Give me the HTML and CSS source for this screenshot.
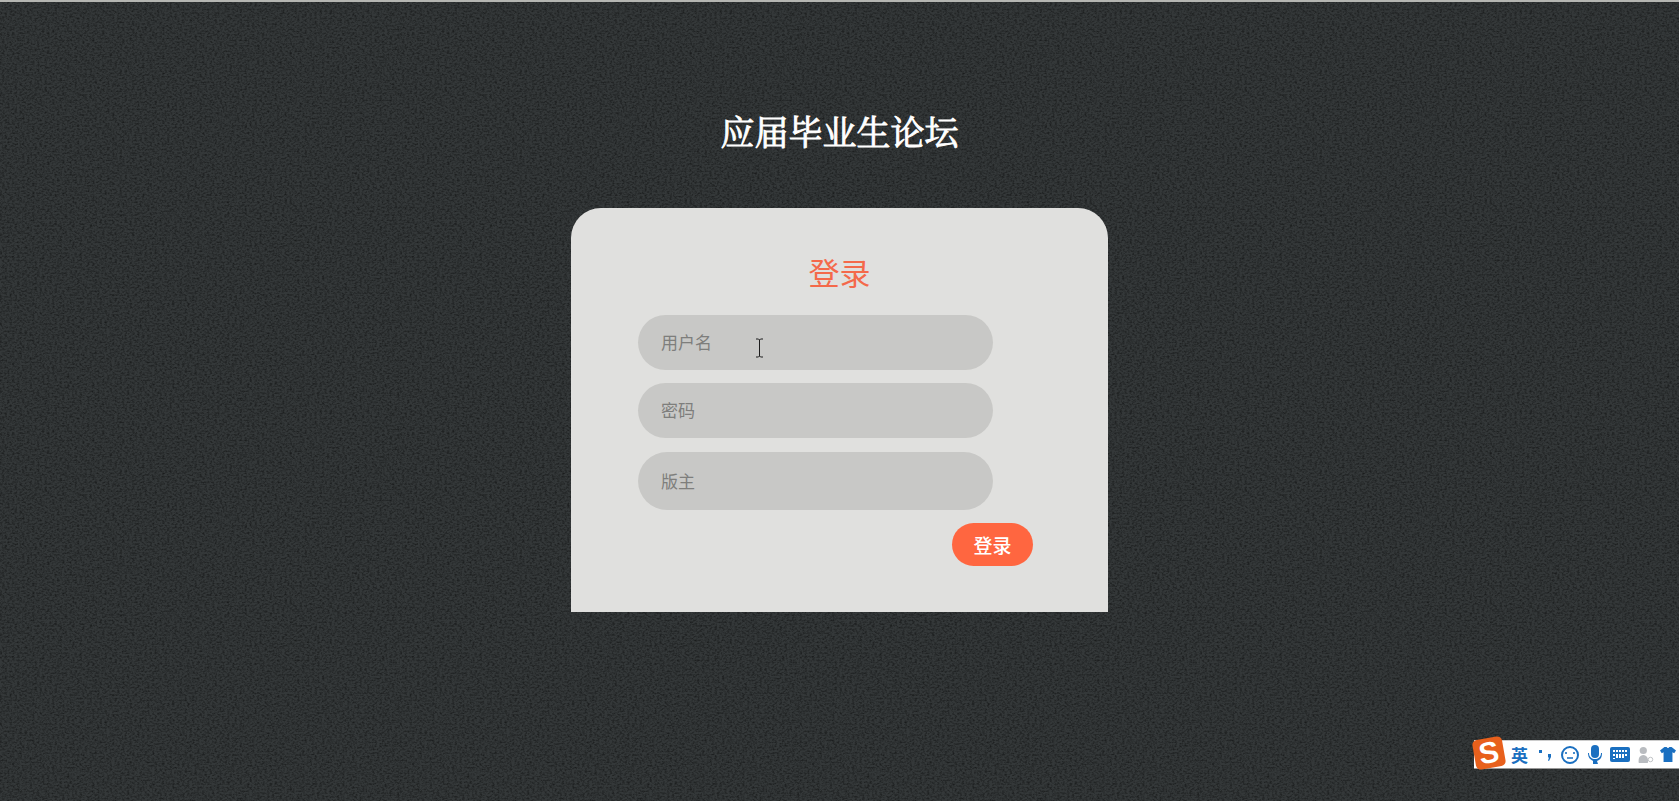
FILE: index.html
```html
<!DOCTYPE html>
<html lang="zh-CN">
<head>
    <meta charset="UTF-8">
    <title>应届毕业生论坛</title>
    <link rel="stylesheet" href="styles.css">
</head>
<body>

    <h1 class="site-title">应届毕业生论坛</h1>

    <div class="login-box">
        <h2 class="login-title">登录</h2>
        <form class="login-form">
            <input class="field" type="text" placeholder="用户名">
            <input class="field" type="password" placeholder="密码">
            <input class="field field-tall" type="text" placeholder="版主">
            <button class="login-button" type="button">登录</button>
        </form>
    </div>

    <!-- text cursor over the first input -->
    <svg class="text-cursor" width="9" height="20" viewBox="0 0 9 20" fill="none" stroke="#1c1c1c" stroke-width="1">
        <path d="M1 1h2.500l1 1 1-1H8M4.500 2v16M1 19h2.500l1-1 1 1H8"/>
    </svg>

    <!-- input method toolbar -->
    <div class="ime-bar">
        <div class="ime-logo">S</div>
        <span class="ime-lang">英</span>
        <svg class="ime-icon ime-punct" width="14" height="14" viewBox="0 0 14 14" fill="#1a6fc0">
            <rect x="1" y="2" width="3" height="3"/>
            <path d="M10 6h3v3l-2 4-1-.5 1-3h-1z"/>
        </svg>
        <svg class="ime-icon" width="20" height="20" viewBox="0 0 20 20" fill="none" stroke="#1a6fc0" stroke-width="2">
            <circle cx="10" cy="10" r="8"/>
            <path d="M6 7v2M14 7v2M7 13h6" stroke-width="1.600"/>
        </svg>
        <svg class="ime-icon" width="16" height="20" viewBox="0 0 16 20" fill="#1a6fc0">
            <rect x="4" y="0" width="8" height="13" rx="4"/>
            <path d="M1 8c0 6 4 7 5 8v3h5l-1-3c3-1 5-3 5-8l-1 0c0 4-3 6-6 6s-6-2-6-6z"/>
        </svg>
        <svg class="ime-icon" width="20" height="15" viewBox="0 0 20 15" fill="#1a6fc0">
            <rect width="20" height="15" rx="2"/>
            <path d="M3 3h2v2H3zM6 3h2v2H6zM9 3h2v2H9zM12 3h2v2h-2zM15 3h2v2h-2zM3 7h2v2H3zM15 7h2v2h-2zM6 7h2v4H6zM9 7h2v4H9zM12 7h2v4h-2zM3 11h2v1H3z" fill="#fff"/>
        </svg>
        <svg class="ime-icon" width="18" height="18" viewBox="0 0 20 18" fill="#b9bcc0">
            <circle cx="7" cy="4" r="4"/>
            <path d="M2 18c-1-5 1-9 5-9s6 4 5 9z"/>
            <circle cx="15" cy="14" r="2.500" fill="none" stroke="#b9bcc0"/>
        </svg>
        <svg class="ime-icon ime-shirt" width="16" height="17" viewBox="0 0 18 17" fill="#1a6fc0">
            <path d="M5 0h2.500c.5 1.500 2.500 1.500 3 0H13l5 4-2 3-2-1v11H4V6L2 7 0 4z"/>
        </svg>
    </div>

</body>
</html>
```

FILE: styles.css
```css
/* General Styles */
body {
    font-family: "Liberation Sans", "Noto Sans CJK SC", sans-serif;
    margin: 0;
    height: 801px;
    overflow: hidden;
    position: relative;
    box-sizing: border-box;
    border-top: 2px solid #b5b6b2;
    background-color: #343839;
    /* woven dark texture */
    background-image: url("data:image/svg+xml;utf8,<svg xmlns='http://www.w3.org/2000/svg' width='400' height='400'><filter id='n'><feTurbulence type='fractalNoise' baseFrequency='0.4 0.55' numOctaves='3' stitchTiles='stitch' seed='4'/><feColorMatrix values='0 0 0 0 0  0 0 0 0 0  0 0 0 0 0  0.95 0 0 0 -0.36'/></filter><rect width='400' height='400' filter='url(%23n)'/></svg>");
}

.site-title {
    margin: 0;
    padding-top: 106px;
    height: 100px;
    line-height: 46px;
    box-sizing: content-box;
    text-align: center;
    color: #fff;
    font-family: "Noto Serif CJK SC", "Liberation Serif", "Noto Sans CJK SC", serif;
    font-size: 34px;
    font-weight: 400;
    -webkit-text-stroke: 0.9px #fff;
}

/* Login box */
.login-box {
    width: 537px;
    height: 404px;
    margin: 0 auto;
    box-sizing: border-box;
    padding-top: 47px;
    background-color: #e0e0de;
    border-radius: 30px 30px 0 0;
}

.login-title {
    margin: 0 0 20px;
    height: 40px;
    line-height: 40px;
    text-align: center;
    color: #f4694a;
    font-size: 31px;
    font-weight: 400;
}

.login-form {
    display: flex;
    flex-direction: column;
    align-items: flex-start;
    gap: 13px;
    padding-left: 67px;
}

.field {
    width: 355px;
    height: 55px;
    box-sizing: border-box;
    padding: 0 23px 2px;
    border: none;
    border-radius: 28px;
    outline: none;
    background-color: #c8c8c6;
    color: #333;
    font-family: "Noto Sans CJK SC", sans-serif;
    font-size: 17px;
}

.field::placeholder {
    color: #7e7e7c;
}

.field-tall {
    height: 58px;
    margin-top: 1px;
    border-radius: 29px;
}

.login-button {
    width: 81px;
    height: 43px;
    margin-left: 314px;
    padding: 0;
    border: none;
    border-radius: 22px;
    background-color: #ff6640;
    color: #fff;
    font-family: "Noto Sans CJK SC", sans-serif;
    font-size: 19px;
    font-weight: 500;
    cursor: pointer;
}

/* Things lying over the page */
.text-cursor {
    position: absolute;
    left: 755px;
    top: 336px;
}

.ime-bar {
    position: absolute;
    right: 0;
    top: 738px;
    width: 191px;
    height: 27px;
    padding-left: 14px;
    display: flex;
    align-items: center;
    gap: 7px;
    background-color: #fff;
    border-top: 1px solid #ccc;
    border-bottom: 1px solid #999;
    box-sizing: content-box;
}

.ime-logo {
    position: absolute;
    left: 0;
    top: -3px;
    width: 30px;
    height: 30px;
    border-radius: 5px;
    transform: rotate(-10deg);
    background-color: #e8601c;
    color: #fff;
    font-size: 30px;
    font-weight: 700;
    line-height: 30px;
    text-align: center;
}

.ime-lang {
    margin-left: 23px;
    margin-right: 3px;
    color: #1a6fc0;
    font-family: "Noto Sans CJK SC", sans-serif;
    font-size: 17px;
    line-height: 20px;
    font-weight: 700;
}

.ime-icon {
    flex-shrink: 0;
}

.ime-punct {
    margin-right: 1px;
}

.ime-shirt {
    margin-left: -2px;
}
```
